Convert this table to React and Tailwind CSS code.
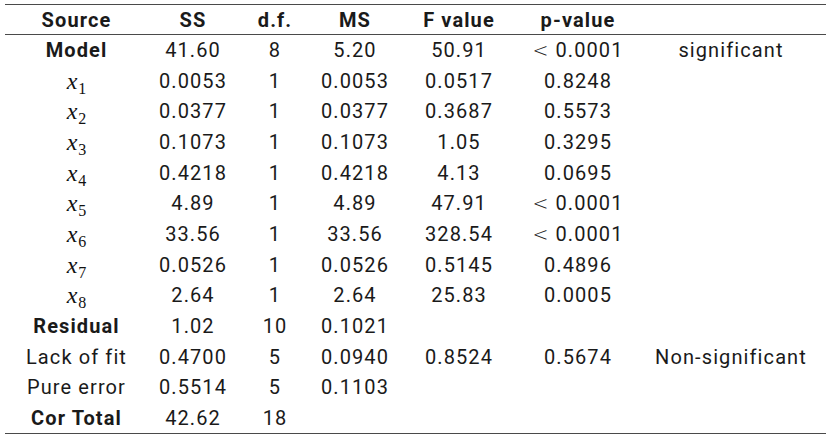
import React from 'react';

const ROWS = [
  { src: 'Model', bold: true, ss: '41.60', df: '8', ms: '5.20', f: '50.91', p: '< 0.0001', note: 'significant' },
  { x: 1, ss: '0.0053', df: '1', ms: '0.0053', f: '0.0517', p: '0.8248' },
  { x: 2, ss: '0.0377', df: '1', ms: '0.0377', f: '0.3687', p: '0.5573' },
  { x: 3, ss: '0.1073', df: '1', ms: '0.1073', f: '1.05', p: '0.3295' },
  { x: 4, ss: '0.4218', df: '1', ms: '0.4218', f: '4.13', p: '0.0695' },
  { x: 5, ss: '4.89', df: '1', ms: '4.89', f: '47.91', p: '< 0.0001' },
  { x: 6, ss: '33.56', df: '1', ms: '33.56', f: '328.54', p: '< 0.0001' },
  { x: 7, ss: '0.0526', df: '1', ms: '0.0526', f: '0.5145', p: '0.4896' },
  { x: 8, ss: '2.64', df: '1', ms: '2.64', f: '25.83', p: '0.0005' },
  { src: 'Residual', bold: true, ss: '1.02', df: '10', ms: '0.1021' },
  { src: 'Lack of fit', ss: '0.4700', df: '5', ms: '0.0940', f: '0.8524', p: '0.5674', note: 'Non-significant' },
  { src: 'Pure error', ss: '0.5514', df: '5', ms: '0.1103' },
  { src: 'Cor Total', bold: true, ss: '42.62', df: '18' },
];

function PValue({ v }) {
  if (!v) return null;
  if (v.startsWith('<')) {
    return (
      <span>
        <span className="font-['DejaVu_Sans',sans-serif] text-[19px] font-light">&lt;</span>
        <span className="ml-[6px]">{v.slice(2)}</span>
      </span>
    );
  }
  return v;
}

function Source({ row }) {
  if (row.x) {
    return (
      <span className="font-['Liberation_Serif',serif] leading-none tracking-normal text-[#111]">
        <i className="text-[24px] leading-none">x</i>
        <span className="relative top-[5px] ml-[1px] text-[16px] leading-none">{row.x}</span>
      </span>
    );
  }
  return <span className={row.bold ? 'font-bold' : ''}>{row.src}</span>;
}

export default function App() {
  const th = 'p-0 text-center font-bold leading-none';
  const td = 'p-0 text-center leading-none';
  return (
    <div className="h-[437px] w-[830px] overflow-hidden bg-white pl-[5px] pt-[4px] font-['Roboto',sans-serif] text-[20px] tracking-[1.1px] text-[#1a1a1a]">
      <table className="w-[821px] table-fixed border-collapse">
        <colgroup>
          <col className="w-[143px]" />
          <col className="w-[90px]" />
          <col className="w-[74px]" />
          <col className="w-[86px]" />
          <col className="w-[122px]" />
          <col className="w-[116px]" />
          <col className="w-[190px]" />
        </colgroup>
        <thead>
          <tr className="h-[30px] border-y border-[#4a4a4a]">
            <th className={th}>Source</th>
            <th className={th}>SS</th>
            <th className={th}>d.f.</th>
            <th className={th}>MS</th>
            <th className={th}>F value</th>
            <th className={th}>p-value</th>
            <th className={th}></th>
          </tr>
        </thead>
        <tbody>
          {ROWS.map((r, i) => (
            <tr key={i} className={`h-[30.7px] ${i === ROWS.length - 1 ? 'border-b border-[#4a4a4a]' : ''}`}>
              <td className={td}><Source row={r} /></td>
              <td className={td}>{r.ss}</td>
              <td className={td}>{r.df}</td>
              <td className={td}>{r.ms}</td>
              <td className={td}>{r.f}</td>
              <td className={td}><PValue v={r.p} /></td>
              <td className={td}>{r.note}</td>
            </tr>
          ))}
        </tbody>
      </table>
    </div>
  );
}
